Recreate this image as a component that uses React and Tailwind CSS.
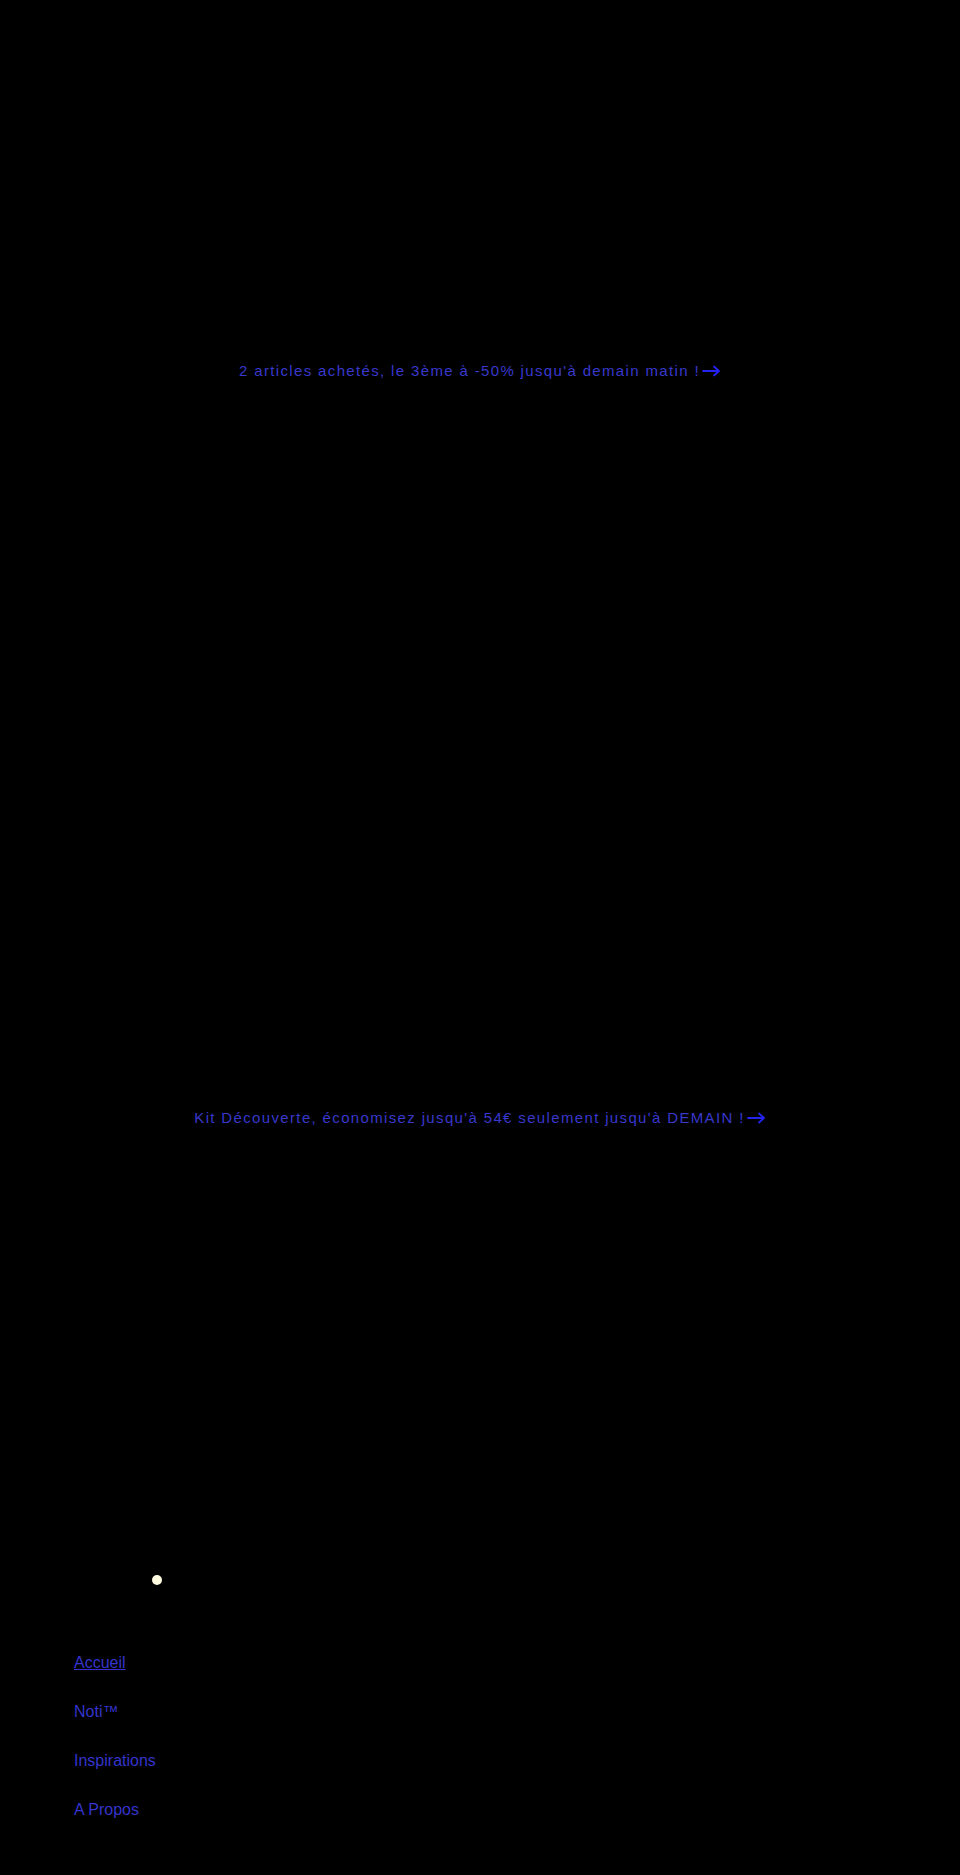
import React from 'react';

const links = ['Accueil', 'Noti™', 'Inspirations', 'A Propos'];

function Announcement({ children }) {
    return (
        <a href="#" className="flex items-center justify-center text-[15px] tracking-[1.35px] text-[#3838cc] no-underline">
            <span>{children}</span>
            <svg width="19" height="12" viewBox="0 0 19 12" fill="none" stroke="#2424f2" strokeWidth="1.8" strokeLinecap="round" strokeLinejoin="round" className="ml-[2px]">
                <path d="M1 6h16M12 1.5 17 6l-5 4.5" />
            </svg>
        </a>
    );
}

export default function App() {
    return (
        <div className="w-[960px] h-[1875px] bg-black font-['Liberation_Sans',Arial,sans-serif] overflow-hidden">
            {/* first promo band */}
            <section className="h-[742px] flex items-center justify-center">
                <Announcement>2 articles achetés, le 3ème à -50% jusqu'à demain matin !</Announcement>
            </section>

            {/* second promo band */}
            <section className="h-[752px] flex items-center justify-center">
                <Announcement>Kit Découverte, économisez jusqu'à 54€ seulement jusqu'à DEMAIN !</Announcement>
            </section>

            {/* menu drawer */}
            <div className="pl-[74px]">
                <div className="pt-[81px] pl-[78px]">
                    <span className="block w-[10px] h-[10px] rounded-full bg-[#fffbe0]"></span>
                </div>
                <nav className="mt-[69px] flex flex-col gap-[31px]">
                    {links.map((l, i) => (
                        <a key={l} href="#" className={`text-[16px] leading-[18px] text-[#3434cc] ${i === 0 ? 'underline' : 'no-underline'}`}>{l}</a>
                    ))}
                </nav>
            </div>
        </div>
    );
}
